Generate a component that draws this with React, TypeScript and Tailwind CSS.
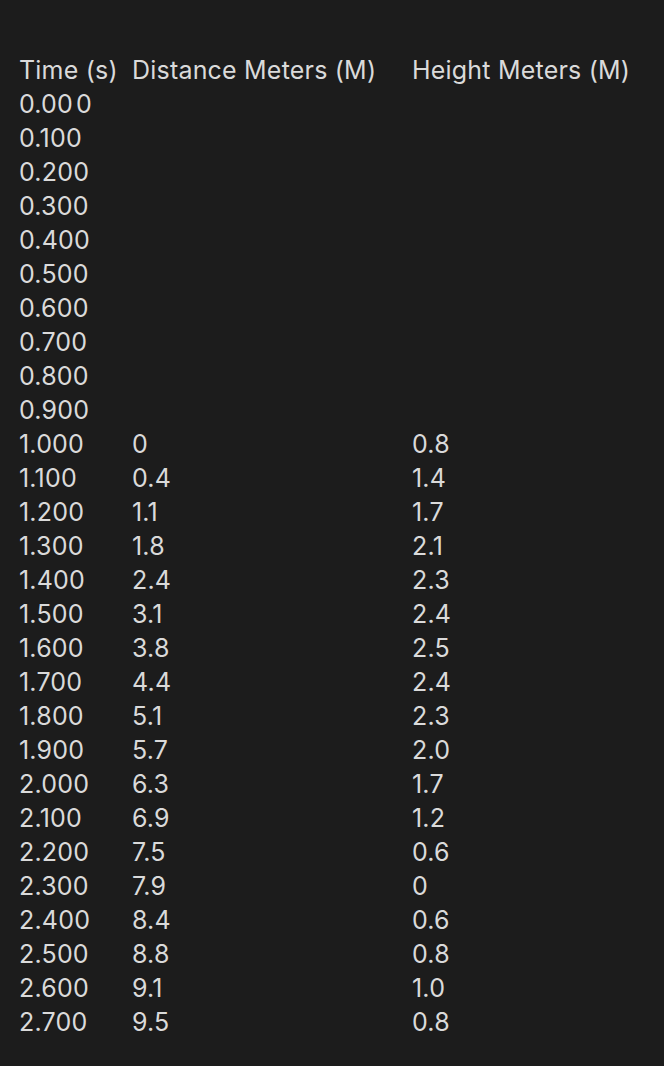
const rows: [string, string, string][] = [
  ["0.000", "", ""],
  ["0.100", "", ""],
  ["0.200", "", ""],
  ["0.300", "", ""],
  ["0.400", "", ""],
  ["0.500", "", ""],
  ["0.600", "", ""],
  ["0.700", "", ""],
  ["0.800", "", ""],
  ["0.900", "", ""],
  ["1.000", "0", "0.8"],
  ["1.100", "0.4", "1.4"],
  ["1.200", "1.1", "1.7"],
  ["1.300", "1.8", "2.1"],
  ["1.400", "2.4", "2.3"],
  ["1.500", "3.1", "2.4"],
  ["1.600", "3.8", "2.5"],
  ["1.700", "4.4", "2.4"],
  ["1.800", "5.1", "2.3"],
  ["1.900", "5.7", "2.0"],
  ["2.000", "6.3", "1.7"],
  ["2.100", "6.9", "1.2"],
  ["2.200", "7.5", "0.6"],
  ["2.300", "7.9", "0"],
  ["2.400", "8.4", "0.6"],
  ["2.500", "8.8", "0.8"],
  ["2.600", "9.1", "1.0"],
  ["2.700", "9.5", "0.8"],
];

export default function App() {
  return (
    <div
      className="min-h-[1066px] w-full bg-[#1c1c1c] text-[#dadada] pt-[53px] pl-[19px]"
      style={{ fontFamily: "Inter, 'Noto Sans', sans-serif" }}
    >
      <div className="grid grid-cols-[113px_280px_1fr] text-[25px] leading-[34px] tracking-[0.2px] whitespace-nowrap">
        <div>Time (s)</div>
        <div>Distance Meters (M)</div>
        <div>Height Meters (M)</div>
        {rows.map(([t, d, h], i) => (
          <div key={i} className="contents">
            <div>
              {i === 0 ? (
                <>
                  0.00<span className="ml-[3px]">0</span>
                </>
              ) : (
                t
              )}
            </div>
            <div>{d}</div>
            <div>{h}</div>
          </div>
        ))}
      </div>
    </div>
  );
}
